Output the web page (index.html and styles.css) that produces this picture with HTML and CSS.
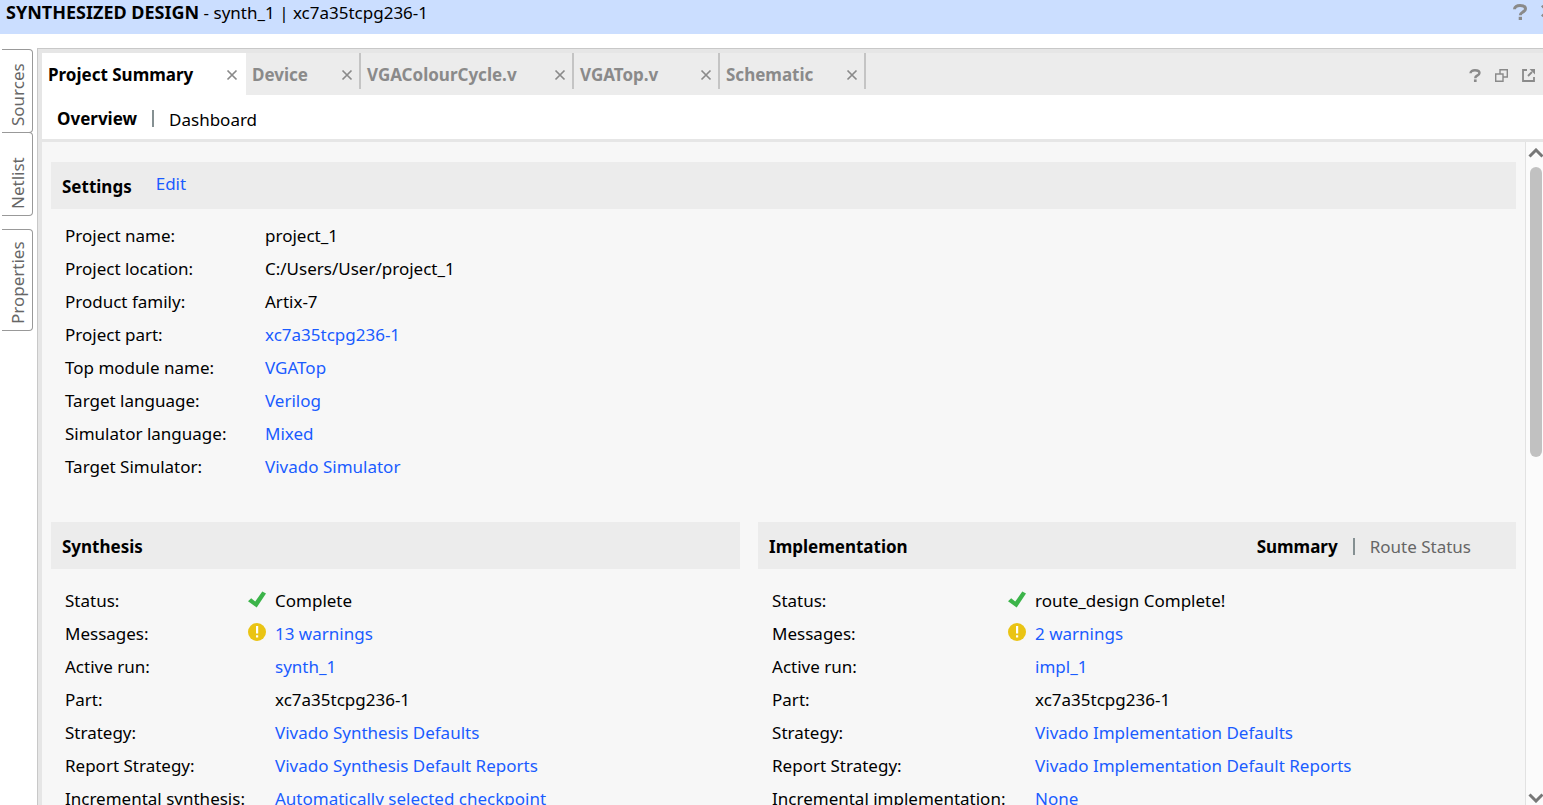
FILE: index.html
```html
<!DOCTYPE html>
<html lang="en">
<head>
<meta charset="utf-8">
<title>Synthesized Design</title>
<link rel="stylesheet" href="styles.css">
</head>
<body>
<svg class="defs" width="0" height="0" aria-hidden="true">
  <symbol id="close" viewBox="0 0 12 12"><path d="M1.500 1.500l9 9M10.500 1.500l-9 9" fill="none" stroke="currentColor" stroke-width="1.700"/></symbol>
  <symbol id="help" viewBox="0 0 14 16"><path d="M1.500 5.200C1.500 2.700 3.800 1.500 7 1.500s5.500 1.200 5.500 3.500c0 1.700-1.400 2.400-2.900 3.200C8.100 9 7.300 9.600 7.300 11.300" fill="none" stroke="currentColor" stroke-width="3"/><path d="M5.700 12.800h3.300V16H5.700z" fill="currentColor"/></symbol>
  <symbol id="check" viewBox="0 0 18 17"><path d="M0 10.200L3.200 7.200L7.200 10.600L14.300 0.600L18 2.400L8.700 16.500z" fill="#3cb44a"/></symbol>
  <symbol id="warn" viewBox="0 0 18 18"><circle cx="9" cy="9" r="9" fill="#eac414"/><path d="M8 3h2.200v7.500H8zM8 12.200h2.200v2.200H8z" fill="#fff"/></symbol>
</svg>
<header class="titlebar">
  <h1 class="title"><strong>SYNTHESIZED DESIGN</strong> - synth_1 | xc7a35tcpg236-1</h1>
  <div class="title-actions">
    <button class="icon-btn" aria-label="Help"><svg width="14" height="16"><use href="#help"/></svg></button>
    <button class="icon-btn" aria-label="Close design"><svg width="14" height="14"><use href="#close"/></svg></button>
  </div>
</header>
<div class="workspace">
  <nav class="side" aria-label="Panels">
    <button class="side-tab">Sources</button>
    <button class="side-tab">Netlist</button>
    <button class="side-tab side-tab-tall">Properties</button>
  </nav>
  <main class="panel">
    <div class="tabbar">
      <div class="tab tab-active tab-summary"><button class="tab-label">Project Summary</button><button class="icon-btn" aria-label="Close Project Summary"><svg width="12" height="12"><use href="#close"/></svg></button></div>
      <div class="tab tab-device"><button class="tab-label">Device</button><button class="icon-btn" aria-label="Close Device"><svg width="12" height="12"><use href="#close"/></svg></button></div>
      <div class="tab tab-cycle"><button class="tab-label">VGAColourCycle.v</button><button class="icon-btn" aria-label="Close VGAColourCycle.v"><svg width="12" height="12"><use href="#close"/></svg></button></div>
      <div class="tab tab-top"><button class="tab-label">VGATop.v</button><button class="icon-btn" aria-label="Close VGATop.v"><svg width="12" height="12"><use href="#close"/></svg></button></div>
      <div class="tab tab-top"><button class="tab-label">Schematic</button><button class="icon-btn" aria-label="Close Schematic"><svg width="12" height="12"><use href="#close"/></svg></button></div>
      <div class="tab-actions">
        <button class="icon-btn" aria-label="Help"><svg width="12" height="13"><use href="#help"/></svg></button>
        <button class="icon-btn" aria-label="Restore"><svg width="13" height="13" viewBox="0 0 13 13"><path d="M.7 5h7.300v7.300H.7zM5 5V.7h7.300V8H8" fill="none" stroke="currentColor" stroke-width="1.400"/></svg></button>
        <button class="icon-btn" aria-label="Float"><svg width="13" height="13" viewBox="0 0 13 13"><path d="M5 1H1v11h11V8M6 7l4-4" fill="none" stroke="currentColor" stroke-width="1.800"/><path d="M7.500 0H13v5.500z" fill="currentColor"/></svg></button>
      </div>
    </div>
    <div class="subnav">
      <button class="link-btn current">Overview</button>
      <span class="divider"></span>
      <button class="link-btn dashboard">Dashboard</button>
    </div>
    <div class="body">
      <div class="content">
        <section>
          <div class="card-head"><h2>Settings</h2><a class="edit" href="#">Edit</a></div>
          <dl class="props">
            <dt>Project name:</dt><dd>project_1</dd>
            <dt>Project location:</dt><dd>C:/Users/User/project_1</dd>
            <dt>Product family:</dt><dd>Artix-7</dd>
            <dt>Project part:</dt><dd><a href="#">xc7a35tcpg236-1</a></dd>
            <dt>Top module name:</dt><dd><a href="#">VGATop</a></dd>
            <dt>Target language:</dt><dd><a href="#">Verilog</a></dd>
            <dt>Simulator language:</dt><dd><a href="#">Mixed</a></dd>
            <dt>Target Simulator:</dt><dd><a href="#">Vivado Simulator</a></dd>
          </dl>
        </section>
        <div class="runs">
          <section>
            <div class="card-head"><h2>Synthesis</h2></div>
            <dl class="props run run-synth">
              <dt>Status:</dt><dd><svg class="state" width="18" height="17"><use href="#check"/></svg>Complete</dd>
              <dt>Messages:</dt><dd><svg class="state" width="18" height="18"><use href="#warn"/></svg><a href="#">13 warnings</a></dd>
              <dt>Active run:</dt><dd><a href="#">synth_1</a></dd>
              <dt>Part:</dt><dd>xc7a35tcpg236-1</dd>
              <dt>Strategy:</dt><dd><a href="#">Vivado Synthesis Defaults</a></dd>
              <dt>Report Strategy:</dt><dd><a href="#">Vivado Synthesis Default Reports</a></dd>
              <dt>Incremental synthesis:</dt><dd><a href="#">Automatically selected checkpoint</a></dd>
            </dl>
          </section>
          <section>
            <div class="card-head"><h2>Implementation</h2>
              <div class="views"><button class="link-btn current">Summary</button><span class="divider"></span><button class="link-btn muted">Route Status</button></div>
            </div>
            <dl class="props run run-impl">
              <dt>Status:</dt><dd><svg class="state" width="18" height="17"><use href="#check"/></svg>route_design Complete!</dd>
              <dt>Messages:</dt><dd><svg class="state" width="18" height="18"><use href="#warn"/></svg><a href="#">2 warnings</a></dd>
              <dt>Active run:</dt><dd><a href="#">impl_1</a></dd>
              <dt>Part:</dt><dd>xc7a35tcpg236-1</dd>
              <dt>Strategy:</dt><dd><a href="#">Vivado Implementation Defaults</a></dd>
              <dt>Report Strategy:</dt><dd><a href="#">Vivado Implementation Default Reports</a></dd>
              <dt>Incremental implementation:</dt><dd><a href="#">None</a></dd>
            </dl>
          </section>
        </div>
      </div>
      <div class="scrollbar" aria-hidden="true">
        <svg width="16" height="10" viewBox="0 0 16 10"><path d="M1.500 8.500L8 2l6.500 6.500" fill="none" stroke="#777" stroke-width="3"/></svg>
        <div class="track"><div class="thumb"></div></div>
        <svg width="16" height="10" viewBox="0 0 16 10"><path d="M1.500 1.500L8 8l6.500-6.500" fill="none" stroke="#777" stroke-width="3"/></svg>
      </div>
    </div>
  </main>
</div>
</body>
</html>
```

FILE: styles.css
```css
* { box-sizing: border-box; }
body {
  margin: 0;
  height: 100vh;
  overflow: hidden;
  display: flex;
  flex-direction: column;
  background: #fff;
  color: #000;
  font: 17px/24px "Noto Sans", "Open Sans", sans-serif;
}
.defs { position: absolute; }
button {
  border: 0;
  padding: 0;
  background: none;
  color: inherit;
  font: inherit;
  white-space: nowrap;
}
a { color: #1a5cff; text-decoration: none; }
h1, h2, dl, dd { margin: 0; }
h2 { font-size: 17px; font-weight: 700; }
.icon-btn { display: flex; color: #8a8a8a; }

.titlebar {
  flex: none;
  display: flex;
  justify-content: space-between;
  height: 34px;
  padding-left: 6px;
  overflow: hidden;
  background: #cbdeff;
}
.title { font-size: 17px; font-weight: 400; white-space: nowrap; }
.title strong { font-size: 18px; }
.title-actions { display: flex; gap: 13px; padding-top: 4px; margin-right: -11px; }

.workspace { flex: 1; min-height: 0; display: flex; }
.side {
  flex: none;
  width: 33px;
  padding: 15px 0 0 2px;
  display: flex;
  flex-direction: column;
}
.side-tab {
  height: 84px;
  padding: 6px 1px 0 0;
  display: flex;
  align-items: center;
  writing-mode: vertical-rl;
  transform: rotate(180deg);
  border: 1px solid #999;
  border-right: 0;
  border-radius: 4px 0 0 4px;
  color: #666;
}
.side-tab + .side-tab { margin-top: -1px; }
.side-tab + .side-tab-tall { height: 102px; margin-top: 13px; }

.panel {
  flex: 1;
  min-width: 0;
  display: flex;
  flex-direction: column;
  margin: 14px 0 0 4px;
  border-top: 1px solid #c8c8c8;
  border-left: 1px solid #c8c8c8;
  background: #e6e6e6;
  padding: 4px 0 0 4px;
}
.tabbar { flex: none; display: flex; height: 42px; background: #ececec; }
.tab {
  display: flex;
  align-items: center;
  justify-content: space-between;
  height: 36px;
  padding: 7px 6px 0 6px;
  border-right: 2px solid #c4c4c4;
  color: #8a8a8a;
  font-weight: 700;
}
.tab-active { height: 42px; padding-bottom: 6px; border-right-color: #fff; background: #fff; color: #000; }
.tab-summary { width: 204px; }
.tab-device { width: 115px; }
.tab-cycle { width: 213px; }
.tab-top { width: 146px; }
.tab-actions { display: flex; align-items: center; gap: 14px; margin-left: auto; padding: 2px 8px 0 0; }

.subnav {
  flex: none;
  display: flex;
  align-items: center;
  height: 47px;
  padding: 3px 0 0 15px;
  border-bottom: 3px solid #e6e6e6;
  background: #fff;
}
.current { font-weight: 700; }
.muted { color: #666; }
.dashboard { padding-top: 3px; }
.divider { width: 2px; height: 17px; margin: 0 15px; background: #859092; }

.body { flex: 1; min-height: 0; display: flex; background: #f7f7f7; }
.content { flex: 1; min-width: 0; overflow: hidden; padding: 20px 9px 0; }
.card-head {
  display: flex;
  align-items: center;
  height: 47px;
  padding: 2px 45px 0 11px;
  background: #ececec;
}
.edit { margin-left: 24px; padding-bottom: 6px; }
.views { display: flex; align-items: center; margin-left: auto; }
.props {
  display: grid;
  grid-template-columns: 200px 1fr;
  padding: 10px 0 0 14px;
  line-height: 33px;
  white-space: nowrap;
}
.runs { display: grid; grid-template-columns: 10fr 11fr; gap: 18px; margin-top: 39px; }
.run { padding-top: 15px; }
.run-synth { grid-template-columns: 210px 1fr; }
.run-impl { grid-template-columns: 263px 1fr; }
.run dd { display: flex; align-items: center; }
.state { margin: 0 9px 3px -27px; }

.scrollbar {
  flex: none;
  width: 18px;
  display: flex;
  flex-direction: column;
  align-items: center;
  padding: 6px 0 2px 2px;
  border-left: 1px solid #e2e2e2;
  background: #fbfbfb;
}
.track { flex: 1; width: 12px; margin: 9px 0; }
.thumb { height: 47%; border-radius: 6px; background: #c1c1c1; }
```
